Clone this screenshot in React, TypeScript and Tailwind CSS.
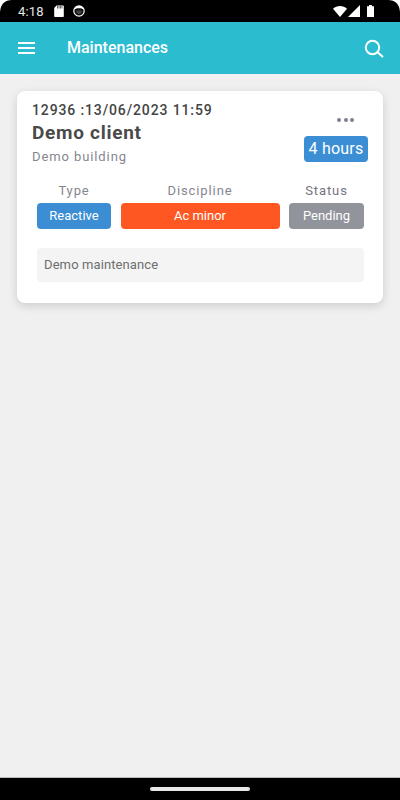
const columns = [
    { label: "Type", value: "Reactive", width: "w-[74px]", color: "bg-[#3b8ed4]", labelColor: "text-[#85868f]" },
    { label: "Discipline", value: "Ac minor", width: "w-[159px]", color: "bg-[#ff5722]", labelColor: "text-[#85868f]" },
    { label: "Status", value: "Pending", width: "w-[75px]", color: "bg-[#92949c]", labelColor: "text-[#73747f]" },
];

function StatusBar() {
    return (
        <div className="h-[22px] bg-black relative flex items-center justify-between pl-[18px] pr-[26px] text-white shrink-0">
            <div className="flex items-center">
                <span className="text-[13px] leading-none tracking-[0.2px] text-[#e8e8e8]">4:18</span>
                {/* sd card */}
                <svg width="10" height="12" viewBox="0 0 10 12" className="ml-[10px]">
                    <path d="M2.5 0.5H9a0.8 0.8 0 0 1 .8.8v9.9a0.8 0.8 0 0 1-.8.8H1a0.8 0.8 0 0 1-.8-.8V3z" fill="#fff" />
                    <path d="M3.5 1v2.5M5 1v2.5M6.5 1v2.5M8 1v2.5" stroke="#000" strokeWidth="0.6" />
                </svg>
                {/* app notification */}
                <svg width="12" height="12" viewBox="0 0 12 12" className="ml-[9px]">
                    <circle cx="6" cy="6" r="5.2" fill="#111" stroke="#fff" strokeWidth="1.2" />
                    <path d="M1.5 4.6C3 2.8 9 2.8 10.5 4.6L10 2.4 8 1H4L2 2.4z" fill="#fff" />
                    <path d="M3.5 5.5h5v2.2L7 9H5L3.5 7.7z" fill="#444" />
                </svg>
            </div>
            <div className="flex items-center">
                <svg width="14" height="11" viewBox="0 0 14 11">
                    <path d="M0 2.8C4-.9 10-.9 14 2.8L7 11z" fill="#fff" />
                </svg>
                <svg width="12" height="12" viewBox="0 0 12 12" className="ml-[1px]">
                    <path d="M12 0V12H0z" fill="#fff" />
                </svg>
                <svg width="7" height="12" viewBox="0 0 7 12" className="ml-[7px]">
                    <path d="M2 0H5V1.2H7V12H0V1.2H2z" fill="#fff" />
                </svg>
            </div>
            <div className="absolute left-0 top-0 w-[14px] h-[14px] bg-white [clip-path:path('M0_0H12Q1_0_0_12Z')]" />
            <div className="absolute right-0 top-0 w-[14px] h-[14px] bg-white [clip-path:path('M14_0H2Q13_0_14_12Z')]" />
        </div>
    );
}

function Header() {
    return (
        <div className="h-[52px] bg-[#2bbccf] flex items-center pl-[18px] pr-[16px] shrink-0">
            <div className="w-[17px] flex flex-col gap-[3px]">
                <div className="h-[2px] bg-white" />
                <div className="h-[2px] bg-white" />
                <div className="h-[2px] bg-white" />
            </div>
            <span className="ml-[32px] text-[16px] font-medium text-white flex-1">Maintenances</span>
            <svg width="20" height="20" viewBox="0 0 20 20" fill="none" stroke="#fff" strokeWidth="2" strokeLinecap="round">
                <circle cx="8.5" cy="9.5" r="6.7" />
                <path d="M13.6 14.2L18.4 18.6" />
            </svg>
        </div>
    );
}

function MaintenanceCard() {
    return (
        <div className="bg-white rounded-[8px] shadow-[0_3px_10px_rgba(0,0,0,0.15)] pt-[11px] pb-[21px] px-[15px]">
            <div className="flex justify-between">
                <div>
                    <div className="text-[14px] leading-[16px] font-medium tracking-[0.87px] text-[#444444] whitespace-nowrap">
                        12936 :13/06/2023 11:59
                    </div>
                    <div className="mt-[3px] text-[19px] leading-[24px] font-bold tracking-[0.72px] text-[#4a4a4a]">Demo client</div>
                    <div className="mt-[4px] text-[13px] leading-[16px] tracking-[0.9px] text-[#85868f]">Demo building</div>
                </div>
                <div className="flex flex-col">
                    <div className="flex gap-[2.5px] mt-[16px] self-end mr-[14px]">
                        <span className="w-[4px] h-[4px] rounded-full bg-[#7f808e]" />
                        <span className="w-[4px] h-[4px] rounded-full bg-[#7f808e]" />
                        <span className="w-[4px] h-[4px] rounded-full bg-[#7f808e]" />
                    </div>
                    <div className="mt-[14px] h-[26px] w-[64px] rounded-[4px] bg-[#3b8ed4] flex items-center justify-center text-[16px] tracking-[0.2px] text-white">
                        4 hours
                    </div>
                </div>
            </div>
            <div className="mt-[18px] ml-[5px] mr-[4px] flex justify-between">
                {columns.map((c) => (
                    <div key={c.label} className="flex flex-col items-center">
                        <span className={`text-[13px] leading-[16px] tracking-[0.9px] ${c.labelColor}`}>{c.label}</span>
                        <div className={`mt-[4px] h-[26px] rounded-[4px] flex items-center justify-center text-[13px] text-white ${c.width} ${c.color}`}>
                            {c.value}
                        </div>
                    </div>
                ))}
            </div>
            <div className="mt-[19px] ml-[5px] mr-[4px] h-[34px] rounded-[4px] bg-[#f4f4f4] flex items-center px-[7px] text-[13px] tracking-[0.1px] text-[#6e6e6e]">
                Demo maintenance
            </div>
        </div>
    );
}

export default function App() {
    return (
        <div className="w-[400px] h-[800px] flex flex-col bg-[#f0f0f0] font-['Roboto',sans-serif] overflow-hidden">
            <StatusBar />
            <Header />
            <div className="flex-1 pt-[17px] px-[17px]">
                <MaintenanceCard />
            </div>
            <div className="h-[23px] bg-black flex items-center justify-center shrink-0 border-t border-[#bbbbbb]">
                <div className="w-[100px] h-[4px] rounded-full bg-[#e8e8e8]" />
            </div>
        </div>
    );
}
